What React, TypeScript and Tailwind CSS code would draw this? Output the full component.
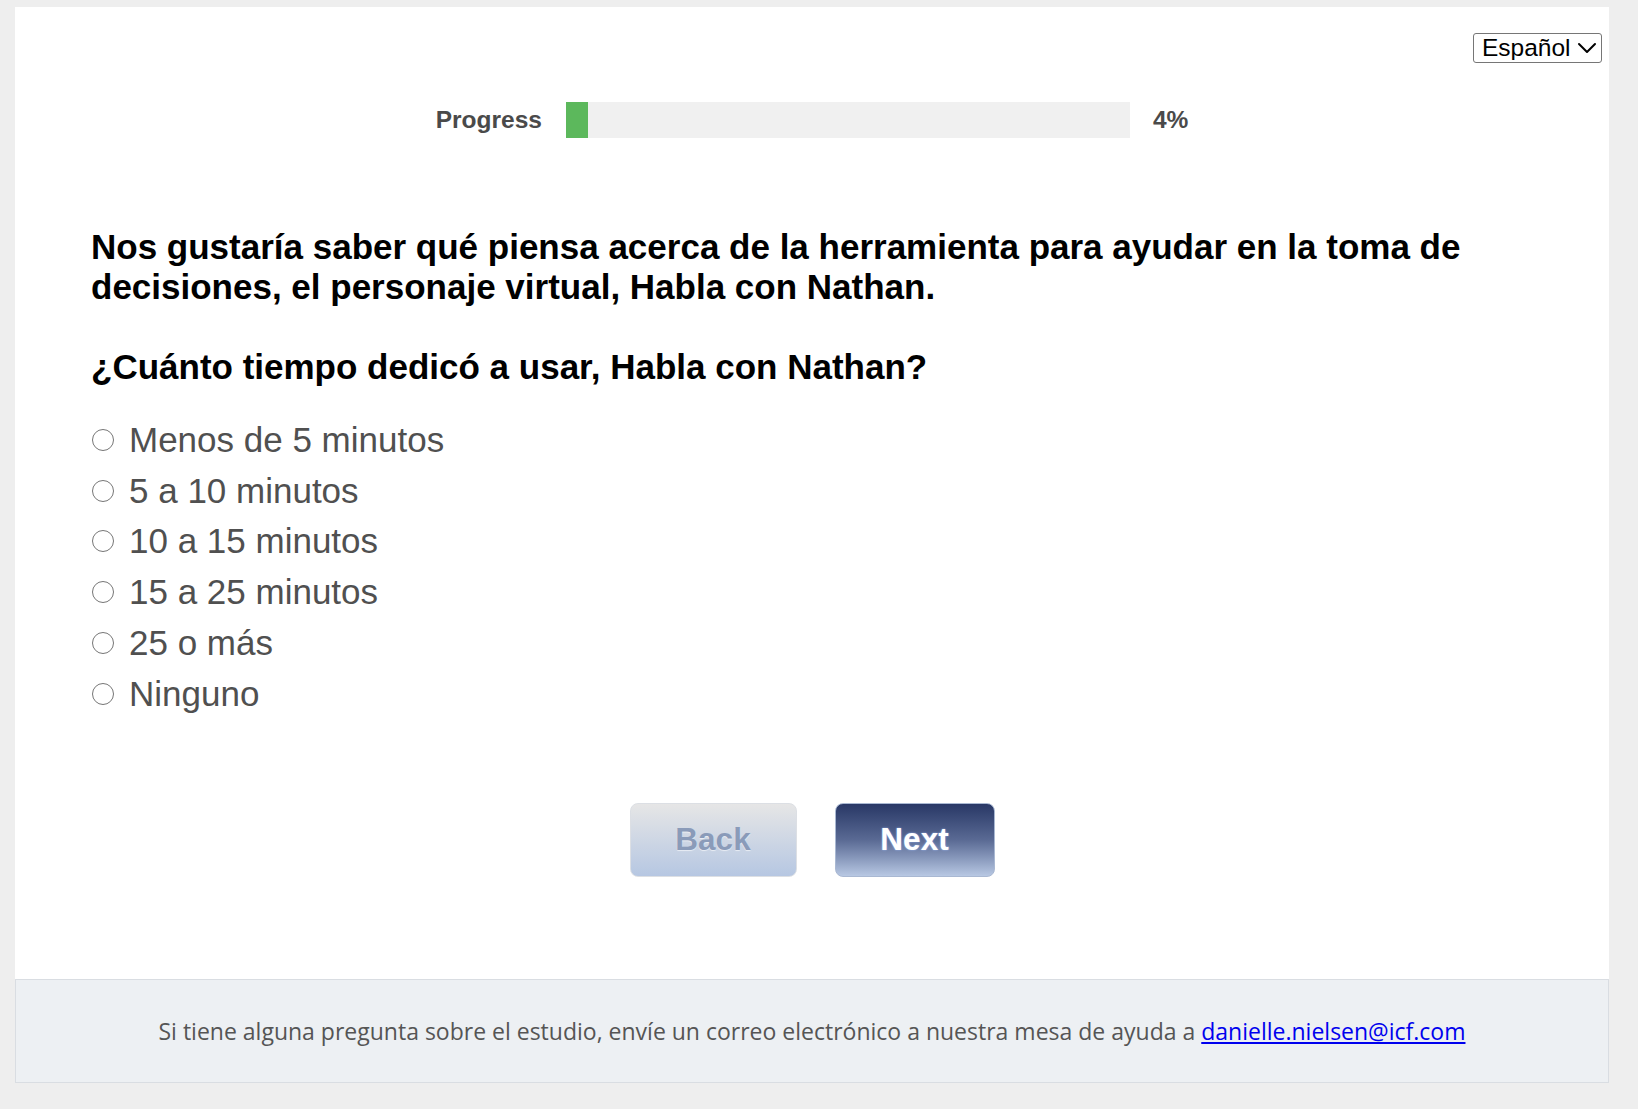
import { ChevronDown } from 'lucide-react';

const options = ['Menos de 5 minutos', '5 a 10 minutos', '10 a 15 minutos', '15 a 25 minutos', '25 o más', 'Ninguno'];

export default function App() {
    const progress = 4;

    return (
        <div className="min-h-screen bg-[#eeeeee] pt-[7px] pb-[26px] pl-[15px] font-['Liberation_Sans',Arial,sans-serif]">
            <div className="w-[1594px]">
                <main className="flex h-[972px] flex-col bg-white">
                    {/* language picker */}
                    <div className="flex justify-end pt-[26px] pr-[7px]">
                        <div className="relative">
                            <select
                                defaultValue="es"
                                className="h-[30px] w-[129px] appearance-none rounded-[3px] border border-[#767676] bg-white pl-[8px] text-[24.5px] leading-none text-black outline-none"
                            >
                                <option value="es">Español</option>
                                <option value="en">English</option>
                            </select>
                            <ChevronDown
                                className="pointer-events-none absolute top-1/2 right-[-1px] h-[32px] w-[32px] -translate-y-1/2 text-black"
                                strokeWidth={1.5}
                            />
                        </div>
                    </div>

                    {/* progress */}
                    <div className="mt-[39px] flex h-[36px] items-center justify-center">
                        <span className="text-[24.5px] font-bold text-[#4a4a4a]">Progress</span>
                        <div className="ml-[24px] h-[36px] w-[564px] bg-[#f0f0f0]">
                            <div className="h-full bg-[#5cb85c]" style={{ width: `${progress}%` }} />
                        </div>
                        <span className="ml-[23px] text-[24.5px] font-bold text-[#4a4a4a]">{progress}%</span>
                    </div>

                    <section className="px-[76px]">
                        <h1 className="mt-[89px] text-[35px] leading-[40px] font-bold text-black">
                            Nos gustaría saber qué piensa acerca de la herramienta para ayudar en la toma de
                            decisiones, el personaje virtual, Habla con Nathan.
                        </h1>
                        <h2 className="mt-[40px] text-[35px] leading-[40px] font-bold text-black">
                            ¿Cuánto tiempo dedicó a usar, Habla con Nathan?
                        </h2>

                        <div className="mt-[27.5px] flex flex-col">
                            {options.map((label) => (
                                <label key={label} className="flex h-[50.75px] cursor-pointer items-center">
                                    <input
                                        type="radio"
                                        name="time"
                                        className="ml-[1px] h-[22px] w-[22px] appearance-none rounded-full border-[1.5px] border-[#767676] bg-white"
                                    />
                                    <span className="ml-[15px] text-[35px] leading-[40px] text-[#505050]">{label}</span>
                                </label>
                            ))}
                        </div>
                    </section>

                    <div className="mt-[84px] flex justify-center gap-[38px]">
                        <button className="h-[74px] w-[167px] rounded-[8px] border border-[#dcdfe4] bg-gradient-to-b from-[#e6e6e6] to-[#b6c7e2] text-[31.5px] font-bold text-[#8a9bb9] [text-shadow:0_1px_1px_rgba(255,255,255,0.6)]">
                            Back
                        </button>
                        <button className="h-[74px] w-[160px] rounded-[8px] border border-[#a9b8d2] bg-gradient-to-b from-[#293866] via-[#5a6a94] to-[#b8c8e3] text-[31.5px] font-bold text-white [text-shadow:0_0_2px_rgba(160,190,255,0.9)]">
                            Next
                        </button>
                    </div>
                </main>

                <footer className="flex h-[104px] items-center justify-center border border-[#d9dde2] bg-[#edf0f3] font-['Open_Sans','Noto_Sans',sans-serif] text-[23px] text-[#555555]">
                    <p>
                        Si tiene alguna pregunta sobre el estudio, envíe un correo electrónico a nuestra mesa de ayuda a{' '}
                        <a href="mailto:danielle.nielsen@icf.com" className="text-[#0000ee] underline">
                            danielle.nielsen@icf.com
                        </a>
                    </p>
                </footer>
            </div>
        </div>
    );
}
